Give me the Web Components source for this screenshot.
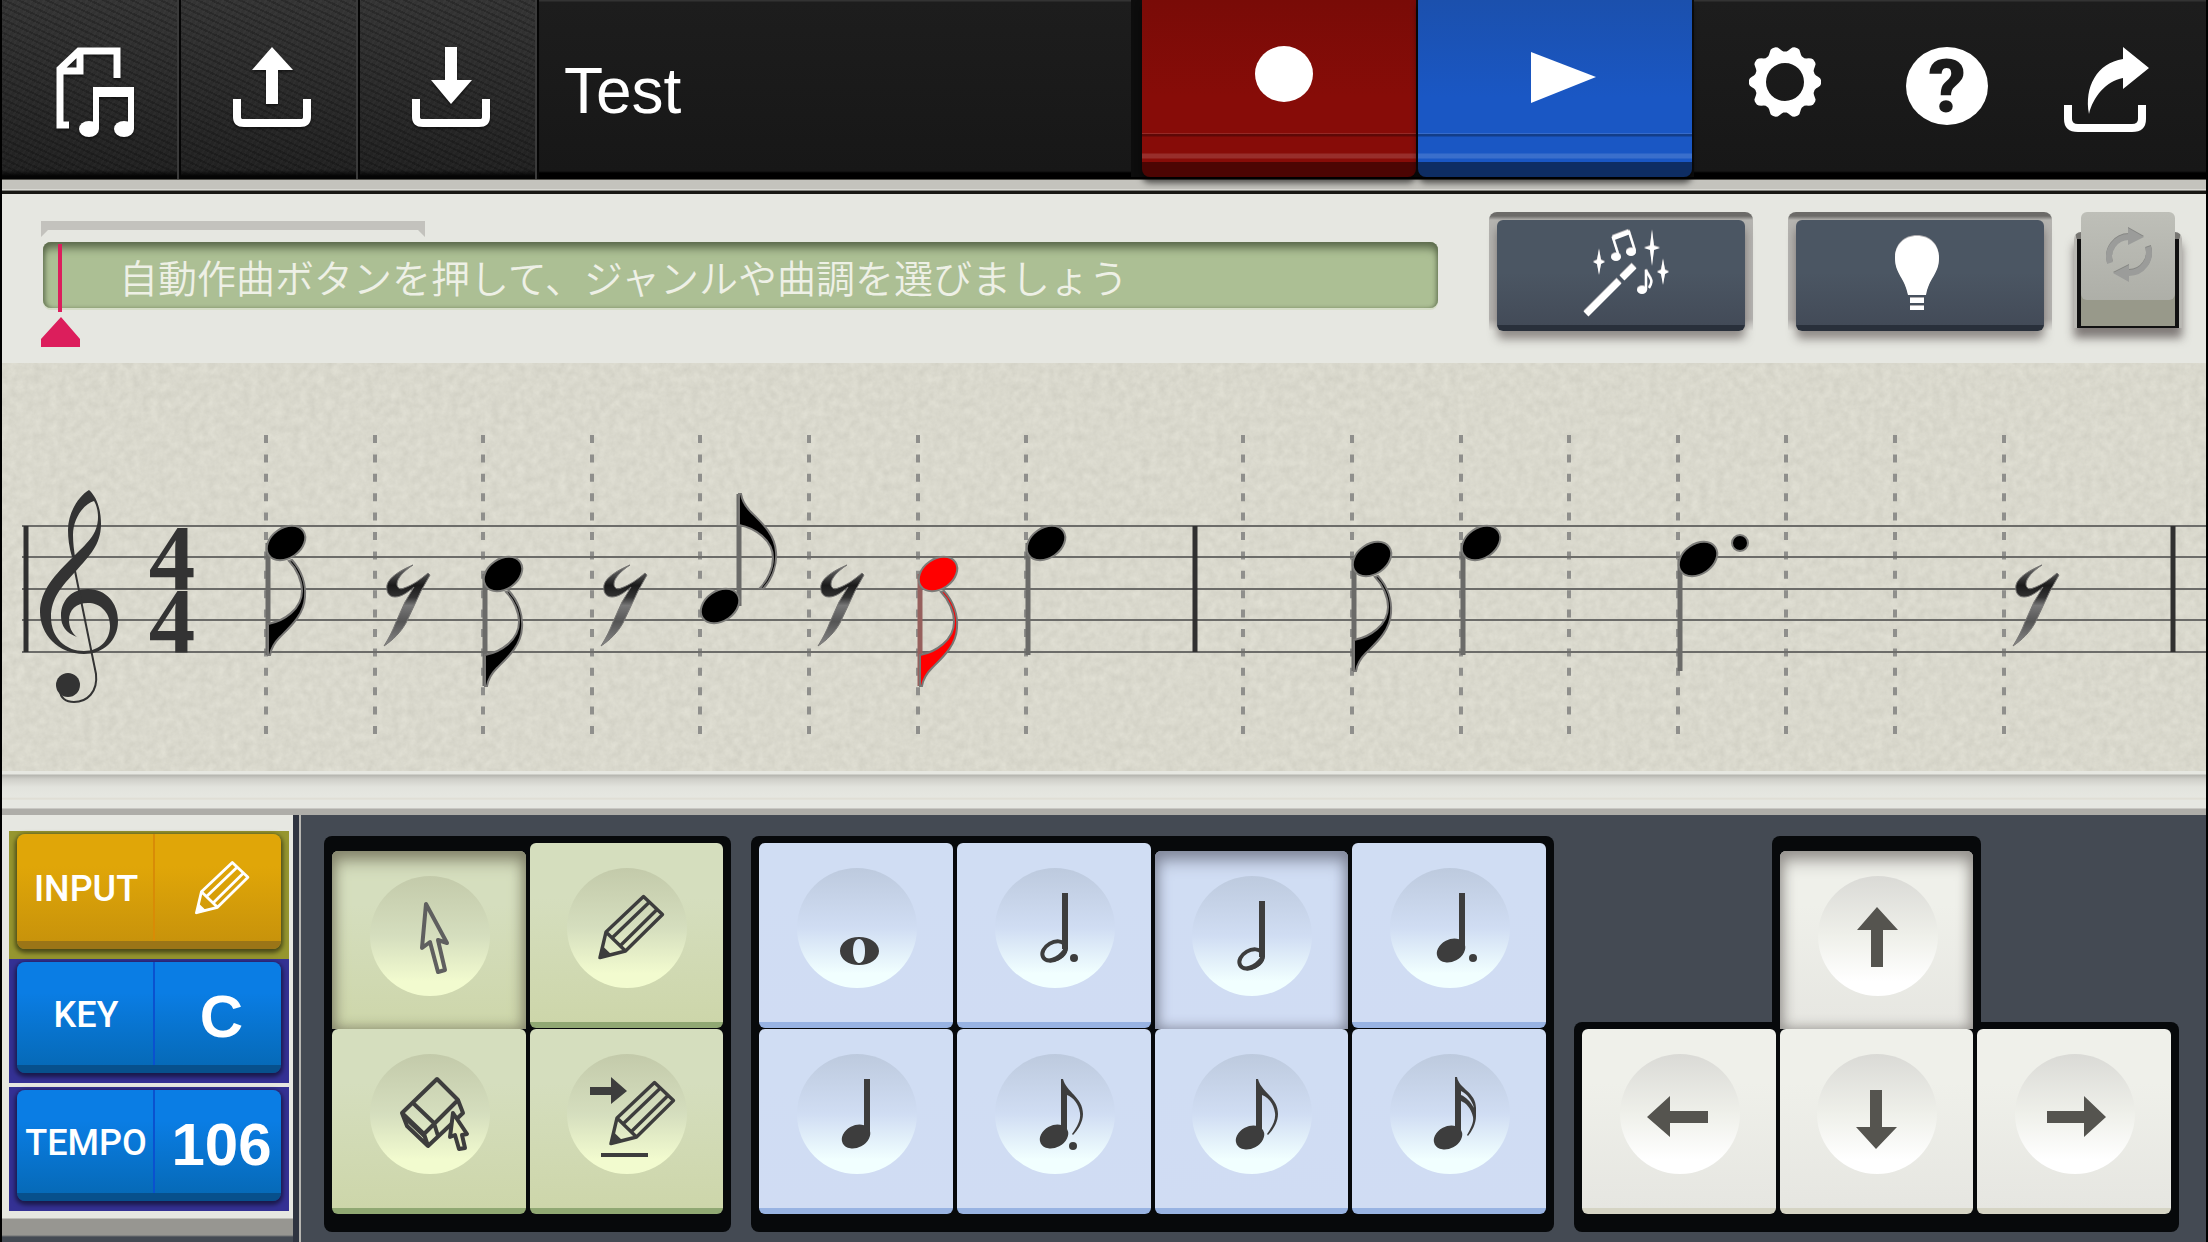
<!DOCTYPE html>
<html lang="ja">
<head>
<meta charset="utf-8">
<title>Test</title>
<style>
  body {
    margin: 0;
    background: #000;
    font-family: "Liberation Sans", Arial, sans-serif;
  }
</style>
</head>
<body>
<score-editor></score-editor>

<script>
/** Icon markup, keyed by name: [viewBox, width, height, content]. */
const pencil = `
  <g fill="none" stroke="currentColor" stroke-width="3.4" stroke-linejoin="round">
    <path d="M33,89.5 L39,64 L76.5,28.5 L95.5,46.5 L58.5,83 Z M39,64 L58.5,83 M45.5,69.5 L82,34.5 M53.5,77.5 L89.5,42"/>
  </g>
  <path fill="currentColor" d="M31.5,91 L35.5,78 L45,87 Z"/>`;

const head = '<ellipse cx="59" cy="82.5" rx="15" ry="11" transform="rotate(-28 59 82.5)"/>';
const openHead = `
  <ellipse cx="59" cy="83" rx="12.5" ry="8.5" transform="rotate(-30 59 83)" fill="none" stroke="currentColor" stroke-width="4"/>
  <path d="M46,88 C48,93 52,95 57,94 C66,93 73,87 73,80 L70,77 C68,84 60,91 50,91 Z"/>`;
const stem = '<rect x="67" y="25" width="6" height="56"/>';
const flag = '<path d="M64,25 H66 C69,38 86,43 86,60 C86,68 81,76 76,81 L75,80 C80,73 84,66 83,59 C82,50 76,43 70,41 V82 H64 Z"/>';
const circlePad = (content) => ['0 0 120 120', 120, 120, `<g fill="currentColor">${content}</g>`];

// Cog outline: ten rounded teeth round a hole
function cogPath() {
  const points = [];
  for (let a = 0; a < 360; a += 3) {
    const t = a * Math.PI / 180;
    const wave = Math.max(-0.8, Math.min(0.7, Math.cos(t * 10)));
    const r = 33.5 + wave * 3.6;
    points.push(`${(37 + r * Math.cos(t)).toFixed(1)},${(35 + r * Math.sin(t)).toFixed(1)}`);
  }
  return `M${points.join(' L')} Z M56,35 A19,19 0 1 0 18,35 A19,19 0 1 0 56,35 Z`;
}

const star = (x, y, w, h) =>
  `<path d="M${x},${y - h} L${x + 2},${y - 2} L${x + w},${y} L${x + 2},${y + 2} L${x},${y + h} L${x - 2},${y + 2} L${x - w},${y} L${x - 2},${y - 2} Z"/>`;

const tray = '<path d="M4,52 V70 Q4,76 11,76 H67 Q74,76 74,70 V52" fill="none" stroke="currentColor" stroke-width="8"/>';

const ICONS = {
  songs: ['-8 0 87 90', 87, 90, `
    <path d="M13,78 H4 V22 L23,4 H61 V31 M24,4 V24 H4" fill="none" stroke="currentColor" stroke-width="7"/>
    <path fill="currentColor" d="M37,40 H78 V82 H72 V50 H43 V82 H37 Z"/>
    <ellipse fill="currentColor" cx="33" cy="82" rx="10" ry="8"/>
    <ellipse fill="currentColor" cx="68" cy="82" rx="10" ry="8"/>`],
  upload: ['-4 0 83 80', 83, 80, `
    <path fill="currentColor" d="M39,0 L60,23 H45 V57 H33 V23 H19 Z"/>${tray}`],
  download: ['-4 0 83 80', 83, 80, `
    <path fill="currentColor" d="M33,0 H45 V33 H60 L39,57 L19,33 H33 Z"/>${tray}`],
  record: ['-9 0 67 56', 67, 56, '<ellipse fill="currentColor" cx="29" cy="28" rx="29" ry="28"/>'],
  play: ['2 0 85 58', 85, 58, '<path fill="currentColor" d="M20,6 L85,31 L20,57 Z"/>'],
  settings: ['0 0 74 70', 74, 70, `<path fill="currentColor" fill-rule="evenodd" d="${cogPath()}"/>`],
  help: ['-2 0 84 78', 84, 78, `
    <ellipse fill="currentColor" cx="41" cy="39" rx="41" ry="39"/>
    <text x="41" y="65" text-anchor="middle" font-family="Roboto, sans-serif" font-weight="900" font-size="74" fill="#1b1b1b">?</text>`],
  share: ['0 0 86 86', 86, 86, `
    <path fill="currentColor" d="M59,0 L85,21 L59,42 V31 C42,34 29,50 25,67 C20,40 33,16 59,12 Z"/>
    <path d="M4,58 V72 Q4,81 14,81 H68 Q78,81 78,72 V58" fill="none" stroke="currentColor" stroke-width="8"/>`],
  wand: ['-10 0 96 86', 96, 86, `
    <g fill="none" stroke="currentColor">
      <path d="M3,84 L36,51 M39,48 L51,36" stroke-width="7"/>
      <path d="M36,27 L30,8 L46,2 L52,21" stroke-width="2.4"/>
      <path d="M30,8 L46,2" stroke-width="5"/>
      <path d="M63,60 V40 C65,47 72,49 66,58" stroke-width="2.4"/>
    </g>
    <g fill="currentColor">
      <ellipse cx="33" cy="27" rx="5" ry="4"/><ellipse cx="48" cy="22" rx="5" ry="4"/>
      <ellipse cx="59" cy="60" rx="5" ry="4"/>
      ${star(16, 32, 6, 13)}${star(69, 18, 8, 18)}${star(80, 42, 6, 13)}
    </g>`],
  hint: ['0 0 50 74', 50, 74, `
    <path fill="currentColor" d="M22,0 C35,0 44,9 44,22 C44,38 34,42 31,59 H13 C10,42 0,38 0,22 C0,9 9,0 22,0 Z M15,62 H29 V67 H15 Z M15,70 H29 V74 H15 Z"/>`],
  loop: ['0 0 46 54', 46, 54, `
    <path d="M4,35 A20,20 0 0 1 23,9 M42,19 A20,20 0 0 1 23,45" fill="none" stroke="currentColor" stroke-width="6"/>
    <path fill="currentColor" d="M22,0 L38,9 L22,17 Z M23,37 L7,45 L23,54 Z"/>`],
  inputPencil: ['30 26 68 67', 56, 56, pencil],
  cursor: circlePad(`
    <path d="M56,28 L52,72 L60,66 L68,96 L75,94 L68,64 L77,67 Z" fill="none" stroke="#5f5f5f" stroke-width="4" stroke-linejoin="round"/>`),
  pencil: circlePad(pencil),
  eraser: circlePad(`
    <g fill="none" stroke="currentColor" stroke-width="4" stroke-linejoin="round">
      <path d="M67,25 L88,46 L54,80 L32,59 Z M88,46 L93,59 L58,92 L54,80 M32,59 L37,72 L58,92 M43,49 L64,69 L68,82"/>
      <path d="M35,65 L55,84" stroke-width="2"/>
      <path fill="#e6ecbf" d="M83,59 L80,83 L85,81 L89,95 L95,94 L92,81 L97,80 Z"/>
    </g>`),
  insert: circlePad(`
    <path d="M23,33 H44 V23 L60,37 L44,50 V41 H23 Z M34,99 H81 V103 H34 Z"/>
    <g transform="translate(11 0)">${pencil}</g>`),
  whole: circlePad('<path fill-rule="evenodd" d="M62,69 C73,69 82,75 82,83 C82,91 73,97 62,97 C51,97 43,91 43,83 C43,75 51,69 62,69 Z M62,71 C58,71 56,76 56,83 C56,90 59,95 62,95 C66,95 68,90 68,83 C68,76 66,71 62,71 Z"/>'),
  dottedHalf: circlePad(`${openHead}${stem}<circle cx="79" cy="90" r="4"/>`),
  half: circlePad(`${openHead}${stem}`),
  dottedQuarter: circlePad(`<g transform="translate(2 0)">${head}${stem}</g><circle cx="83" cy="90" r="4"/>`),
  quarter: circlePad(`${head}${stem}`),
  dottedEighth: circlePad(`${head}<g transform="translate(2 0)">${flag}</g><circle cx="78" cy="92" r="4"/>`),
  eighth: circlePad(`<g transform="translate(-1 1)">${head}</g>${flag}`),
  sixteenth: circlePad(`
    <g transform="translate(-1 1)">${head}</g>
    <path d="M65,23 H67 C69,35 86,38 86,54 V62 C86,70 82,77 78,82 L77,81 C81,74 84,68 83,63 C81,54 76,49 71,47 V82 H65 Z"/>
    <path d="M71,37 C77,40 82,46 84,54 C80,47 76,43 71,41 Z" fill="#d3ddee"/>`),
  up: circlePad('<path d="M59,31 L80,54 H65 V91 H53 V54 H39 Z"/>'),
  down: circlePad('<path d="M53,36 H65 V73 H80 L59,95 L39,73 H53 Z"/>'),
  left: circlePad('<path d="M27,63 L50,42 V57 H88 V69 H50 V83 Z"/>'),
  right: circlePad('<path d="M91,63 L69,42 V57 H32 V69 H69 V83 Z"/>')
};

function icon(name) {
  const [viewBox, width, height, content] = ICONS[name];
  return `<svg viewBox="${viewBox}" width="${width}" height="${height}" overflow="visible" aria-hidden="true">${content}</svg>`;
}

/** Base class: renders template() into an open shadow root. */
class BaseElement extends HTMLElement {
  constructor() {
    super();
    this.attachShadow({ mode: 'open' });
  }

  connectedCallback() {
    this.shadowRoot.innerHTML = this.template();
  }
}

/** <tool-button icon="upload" label="Upload"> — leather button on the left of the bar. */
class ToolButton extends BaseElement {
  template() {
    return `
      <style>
        :host { display: block; flex: 0 0 179px; box-sizing: border-box; border-right: 2px solid #050505; }
        button {
          display: flex;
          justify-content: center;
          box-sizing: border-box;
          width: 100%;
          height: 100%;
          padding: 47px 0 0 3px;
          border: 0;
          border-right: 2px solid #3a3a3a;
          color: #fff;
          background:
            linear-gradient(transparent 170px, #050505 176px),
            repeating-linear-gradient(25deg, rgba(0,0,0,.2) 0 2px, transparent 2px 6px),
            repeating-linear-gradient(-55deg, rgba(255,255,255,.02) 0 2px, transparent 2px 5px),
            linear-gradient(#343434, #202020);
        }
        svg { filter: drop-shadow(0 2px 1px rgba(0,0,0,.5)); }
      </style>
      <button type="button" aria-label="${this.getAttribute('label')}">${icon(this.getAttribute('icon'))}</button>
    `;
  }
}
customElements.define('tool-button', ToolButton);

/** <transport-button tone="record|play"> — tall coloured key. */
class TransportButton extends BaseElement {
  template() {
    const tone = this.getAttribute('tone');
    const c = tone === 'record'
      ? { top: '#790b07', face: '#870c08', edge: '#4c0503' }
      : { top: '#1b50ad', face: '#1a57c4', edge: '#0e2d63' };
    return `
      <style>
        :host { display: block; flex: 0 0 274px; height: 177px; position: relative; z-index: 1; }
        button {
          display: flex;
          justify-content: center;
          box-sizing: border-box;
          width: 100%;
          height: 100%;
          padding: 46px 0 0;
          border: 0;
          border-bottom: 15px solid ${c.edge};
          border-radius: 0 0 8px 8px;
          color: #fff;
          background:
            linear-gradient(transparent 133px, rgba(255,255,255,.12) 133px 134px, rgba(0,0,0,.3) 134px 136px, transparent 137px 153px, rgba(255,255,255,.14) 154px 158px, transparent 159px),
            linear-gradient(${c.top}, ${c.face} 60%);
          box-shadow: 0 6px 6px rgba(0,0,0,.6);
        }
      </style>
      <button type="button" aria-label="${this.getAttribute('label')}">${icon(tone)}</button>
    `;
  }
}
customElements.define('transport-button', TransportButton);

/** <bar-button> — flat icon button on the right of the bar. */
class BarButton extends BaseElement {
  template() {
    return `
      <style>
        :host { display: block; flex: 1; }
        button {
          display: flex;
          justify-content: center;
          width: 100%;
          height: 100%;
          padding: 47px 0 0;
          border: 0;
          background: none;
          color: #fff;
        }
      </style>
      <button type="button" aria-label="${this.getAttribute('label')}">${icon(this.getAttribute('icon'))}</button>
    `;
  }
}
customElements.define('bar-button', BarButton);

/** <top-bar> — file tools, song title, transport and settings. */
class TopBar extends BaseElement {
  template() {
    return `
      <style>
        :host { display: block; }
        header {
          display: flex;
          align-items: flex-start;
          height: 179px;
          background: linear-gradient(#333 0 1px, #1d1d1d 2px, #171717 171px, #000 173px);
        }
        tool-button, bar-button { height: 179px; }
        h1 {
          flex: 1;
          margin: 0;
          padding-left: 25px;
          font-size: 64px;
          font-weight: 400;
          line-height: 182px;
          color: #fff;
        }
        .transport {
          display: flex;
          gap: 2px;
          padding: 0 2px 0 11px;
          background: #0d0d0d;
        }
        nav { display: flex; flex: 0 0 484px; padding: 0 18px 0 10px; }
        .rail {
          height: 15px;
          background: linear-gradient(#55544f 0 1px, #c4c3bd 1px 10px, #efefea 11px, #171713 12px);
        }
      </style>
      <header>
        <tool-button icon="songs" label="Songs"></tool-button>
        <tool-button icon="upload" label="Upload"></tool-button>
        <tool-button icon="download" label="Download"></tool-button>
        <h1><slot></slot></h1>
        <div class="transport">
          <transport-button tone="record" label="Record"></transport-button>
          <transport-button tone="play" label="Play"></transport-button>
        </div>
        <nav>
          <bar-button icon="settings" label="Settings"></bar-button>
          <bar-button icon="help" label="Help"></bar-button>
          <bar-button icon="share" label="Share"></bar-button>
        </nav>
      </header>
      <div class="rail"></div>
    `;
  }
}
customElements.define('top-bar', TopBar);

/** <slate-button> — dark raised button set in a groove. */
class SlateButton extends BaseElement {
  template() {
    return `
      <style>
        :host {
          display: block;
          flex: 0 0 248px;
          padding: 8px 8px 0;
          border-radius: 8px 8px 0 0;
          background: linear-gradient(#6c6b68 0 4px, #b5b4b0 8px, #b5b3b0 90%, #e6e7e1);
        }
        button {
          display: flex;
          align-items: center;
          justify-content: center;
          width: 100%;
          height: 111px;
          padding: 0;
          border: 0;
          border-bottom: 6px solid #29303b;
          border-radius: 6px;
          color: #fff;
          background: linear-gradient(#4b5663 50%, #434b58);
          box-shadow: 0 8px 10px rgba(60,50,50,.5);
        }
        svg { filter: drop-shadow(0 -1px 0 rgba(200,195,195,.8)); }
      </style>
      <button type="button" aria-label="${this.getAttribute('label')}">${icon(this.getAttribute('icon'))}</button>
    `;
  }
}
customElements.define('slate-button', SlateButton);

/** <loop-toggle> — small two-position switch. */
class LoopToggle extends BaseElement {
  template() {
    return `
      <style>
        :host { display: block; flex: 0 0 108px; }
        button {
          display: block;
          position: relative;
          box-sizing: border-box;
          width: 100%;
          height: 96px;
          margin-top: 20px;
          padding: 0;
          border: 3px solid #b9b8b3;
          border-width: 7px 3px 0;
          border-top-color: #777672;
          border-radius: 7px 7px 0 0;
          background: #111;
          box-shadow: 0 10px 10px rgba(60,50,50,.6);
        }
        .well {
          display: block;
          height: 85px;
          margin: 0 4px;
          background: #98998a;
        }
        .cap {
          display: flex;
          align-items: center;
          justify-content: center;
          position: absolute;
          inset: -27px 4px 28px;
          padding: 0 0 2px 2px;
          box-sizing: border-box;
          border-radius: 6px;
          background: linear-gradient(#bebfb8, #aeafa8);
          color: #9b9c9a;
        }
        .cap svg { filter: drop-shadow(0 -1px 0 #858683); }
      </style>
      <button type="button" aria-label="Loop" aria-pressed="false">
        <span class="well"></span>
        <span class="cap">${icon('loop')}</span>
      </button>
    `;
  }
}
customElements.define('loop-toggle', LoopToggle);

/** <time-line> — range bracket, message display and playhead. */
class TimeLine extends BaseElement {
  template() {
    return `
      <style>
        :host { display: block; position: relative; flex: 1; padding-top: 9px; }
        .range {
          width: 384px;
          height: 16px;
          background: #c3c2bd;
          clip-path: polygon(0 0, 100% 0, 100% 100%, calc(100% - 7px) 9px, 7px 9px, 0 100%);
        }
        .lcd {
          box-sizing: border-box;
          height: 66px;
          margin: 5px 0 0 2px;
          padding: 4px 0 0 76px;
          border-radius: 8px;
          font-family: "Liberation Sans", "Noto Sans CJK JP", sans-serif;
          font-size: 39px;
          font-weight: 350;
          line-height: 68px;
          white-space: nowrap;
          color: #eef0e6;
          background: #acbf94;
          box-shadow: inset 0 8px 8px -2px #5c6a4c, inset 3px 0 4px -1px #6f7f5c, inset -3px 0 4px -2px #6f7f5c, 0 2px 0 #d6dec8;
        }
        .playhead { position: absolute; left: 0; top: 32px; }
      </style>
      <div class="range"></div>
      <div class="lcd" role="status"><slot></slot></div>
      <svg class="playhead" viewBox="0 0 40 103" width="40" height="103" aria-hidden="true">
        <path fill="#dc1e5c" d="M17,0 H21 V68 H17 Z M20,73 L39,95 V103 H0 V95 Z"/>
      </svg>
    `;
  }
}
customElements.define('time-line', TimeLine);

/** <score-sheet> — two bars of music on paper. */
class ScoreSheet extends BaseElement {
  // Grid position of a half-beat
  gridX(step) {
    return Math.round(266 + step * 108.6);
  }

  note({ step, y, type, up, selected, dotted }) {
    const fill = selected ? '#ff0000' : '#000';
    const x = this.gridX(step) + 20;
    const stemX = up ? 19 : -18;
    const stemEnd = up ? -112 : 112;
    const line = selected ? '#96605d' : '#6b6b69';
    const tail = type === 'eighth'
      ? `<path transform="${up ? 'translate(37 0) scale(1 -1)' : ''}" fill="${fill}" stroke="#777674" stroke-width="2"
          d="M3,18 L6,17 C16,28 20,42 19,54 C18,72 4,84 -6,94 C-12,100 -15,106 -16,112 L-18,112 L-18,81 C-2,78 16,66 16,48 C16,38 11,26 3,18 Z"/>`
      : '';
    return `
      <g transform="translate(${x} ${y})">
        <path d="M${stemX},0 V${stemEnd}" stroke="${line}" stroke-width="5"/>
        ${tail}
        <ellipse rx="21" ry="15" transform="rotate(-35)" fill="${fill}" stroke="#7d7d7a" stroke-width="2"/>
        ${dotted ? '<circle cx="42" cy="-16" r="8" stroke="#7d7d7a" stroke-width="2"/>' : ''}
      </g>`;
  }

  rest(step) {
    return `
      <path transform="translate(${this.gridX(step)} 0)" fill="url(#ink)" stroke="#777674" stroke-width="1"
        d="M38,565 C29,571 22,578 22,584 C22,588 25,590 29,588 C38,585 46,579 53,573 L55,575 L46,591 L31,623 C26,632 18,640 9,646 C14,638 18,630 21,622 L30,602 L39,587 C32,593 26,597 20,597 C13,597 11,591 12,585 C14,577 26,570 38,565 Z"/>`;
  }

  template() {
    const steps = [0, 1, 2, 3, 4, 5, 6, 7, 9, 10, 11, 12, 13, 14, 15, 16];
    const notes = [
      { step: 0, y: 543, type: 'eighth' },
      { step: 2, y: 574, type: 'eighth' },
      { step: 4, y: 606, type: 'eighth', up: true },
      { step: 6, y: 574, type: 'eighth', selected: true },
      { step: 7, y: 543, type: 'quarter' },
      { step: 10, y: 559, type: 'eighth' },
      { step: 11, y: 543, type: 'quarter' },
      { step: 13, y: 559, type: 'quarter', dotted: true }
    ];
    return `
      <style>
        :host { display: block; background: #e6e7e1; }
        .sheet { display: block; width: 100%; height: auto; }
        .edge {
          height: 37px;
          background: linear-gradient(#e6e7e1 0 3px, #b5b5af 4px, #cfcfc9 8px, #e2e3dd 16px, #e6e7e1 26px, #dedcd2 28px, #e6e7e1 29px);
        }
        .rail { height: 7px; background: #aeada8; border-top: 1px solid #c9c8c3; box-sizing: border-box; }
      </style>
      <svg class="sheet" viewBox="2 363 2204 408" role="img" aria-label="Score">
        <defs>
          <filter id="paper" x="0" y="0" width="100%" height="100%" color-interpolation-filters="sRGB">
            <feTurbulence type="fractalNoise" baseFrequency="0.12" numOctaves="5" seed="4"/>
            <feColorMatrix values=".08 0 0 0 .812  .08 0 0 0 .808  .08 0 0 0 .763  0 0 0 0 1"/>
          </filter>
          <linearGradient id="ink" x1="0" y1="0" x2="0" y2="1">
            <stop offset="0" stop-color="#777"/>
            <stop offset=".25" stop-color="#1a1a1a"/>
            <stop offset=".4" stop-color="#333"/>
            <stop offset=".5" stop-color="#777"/>
            <stop offset=".7" stop-color="#555"/>
            <stop offset="1" stop-color="#888"/>
          </linearGradient>
        </defs>
        <rect x="2" y="363" width="2204" height="408" filter="url(#paper)"/>
        <g stroke="#8f8f8c" stroke-width="4" stroke-dasharray="8 11.4">
          ${steps.map(s => `<path d="M${this.gridX(s)},435 V735"/>`).join('')}
        </g>
        <path d="M22,526 H2206 M22,557 H2206 M22,589 H2206 M22,620 H2206 M22,652 H2206" stroke="#6c6c69" stroke-width="2"/>
        <path d="M26,526 V652 M1195,526 V652 M2173,526 V652" stroke="#303030" stroke-width="5"/>
        <g fill="#333">
          <path d="M89,490 C97,497 101,510 101,524 C101,545 89,556 76,571 C62,586 51,598 51,617 C51,638 66,651 84,651 C100,651 110,640 110,626 C110,611 99,603 88,603 C76,603 69,610 69,620 C69,627 72,633 77,637 C66,633 61,626 61,616 C61,600 72,589 88,589 C106,589 118,603 118,621 C118,641 103,654 84,654 C58,654 40,634 40,612 C40,590 56,574 72,558 C86,544 98,535 98,517 C98,510 96,504 94,501 C84,504 73,518 73,535 C73,543 74,550 75,557 L72,557 C69,547 68,538 68,530 C68,512 79,496 89,490 Z"/>
          <path d="M74,566 L96,674 C98,692 87,702 74,702 C66,702 60,698 60,690" fill="none" stroke="#333" stroke-width="2"/>
          <ellipse cx="68" cy="685" rx="12" ry="12"/>
          <g font-family="'Liberation Serif', serif" font-weight="700" font-size="93" text-anchor="middle">
            <text x="172" y="589">4</text>
            <text x="172" y="652">4</text>
          </g>
        </g>
        ${notes.map(n => this.note(n)).join('')}
        ${[1, 3, 5, 16].map(s => this.rest(s)).join('')}
      </svg>
      <div class="edge"></div>
      <div class="rail"></div>
    `;
  }
}
customElements.define('score-sheet', ScoreSheet);

/** <setting-tile tone="gold|blue" label="KEY">value</setting-tile> */
class SettingTile extends BaseElement {
  template() {
    const gold = this.getAttribute('tone') === 'gold';
    const c = gold
      ? { mat: '#96962f', top: '#e0a608', low: '#c8930b', lip: '#9b7517', line: '#d88c06' }
      : { mat: '#343194', top: '#0a7de4', low: '#066ab8', lip: '#07508c', line: '#0a52cf' };
    return `
      <style>
        :host { display: block; padding: 3px 8px 10px; background: ${c.mat}; }
        button {
          display: flex;
          box-sizing: border-box;
          width: 100%;
          height: ${gold ? 115 : 111}px;
          padding: 0;
          border: 0;
          border-bottom: 8px solid ${c.lip};
          border-radius: 8px;
          color: #fff;
          background: linear-gradient(${c.top} 30%, ${c.low});
          box-shadow: 0 2px 4px 2px rgba(0,0,0,.5);
        }
        .label, .value {
          display: flex;
          align-items: center;
          justify-content: center;
          box-sizing: border-box;
          height: 100%;
        }
        .label {
          flex: 0 0 138px;
          padding: 3px 0 0 2px;
          border-right: 2px solid ${c.line};
          font: 500 36px Roboto, sans-serif;
        }
        .value {
          flex: 1;
          padding: 6px 0 0 7px;
          font: 700 60px "Liberation Sans", Arial, sans-serif;
        }
        .value svg { margin-bottom: 6px; }
      </style>
      <button type="button">
        <span class="label">${this.getAttribute('label')}</span>
        <span class="value">${this.hasAttribute('icon') ? icon(this.getAttribute('icon')) : '<slot></slot>'}</span>
      </button>
    `;
  }
}
customElements.define('setting-tile', SettingTile);

/** <pad-key icon="half" tone="blue" pressed> — one key of a pad. */
class PadKey extends BaseElement {
  template() {
    const tones = {
      green: { top: '#d5debe', low: '#cdd6aa', lip: '#90a873', dip: '#c3caaa', glow: '#f2fbcf', ink: '#3d3d3d', shade: '#83836b' },
      blue: { top: '#d0ddf3', low: '#d0dcf3', lip: '#98b3e2', dip: '#bdcade', glow: '#f1ffff', ink: '#3d3d3d', shade: '#81879a' },
      white: { top: '#eff0ea', low: '#e6e6e1', lip: '#d5d4c4', dip: '#dadad6', glow: '#ffffff', ink: '#55544f', shade: '#94918d' }
    };
    const c = tones[this.getAttribute('tone')];
    const pressed = this.hasAttribute('pressed');
    return `
      <style>
        :host { display: block; height: 186px; }
        button {
          display: flex;
          justify-content: center;
          box-sizing: border-box;
          width: 100%;
          height: 185px;
          padding: 25px 0 0 2px;
          border: 0;
          border-bottom: 6px solid ${c.lip};
          border-radius: 6px;
          color: ${c.ink};
          background: linear-gradient(${c.top} 30%, ${c.low});
        }
        .pressed {
          height: 178px;
          margin-top: 8px;
          border-bottom: 0;
          border-radius: 6px 6px 0 0;
          box-shadow: inset 0 10px 18px -2px ${c.shade}, inset 0 0 14px 0 ${c.shade};
        }
        .dish {
          width: 120px;
          height: 120px;
          border-radius: 50%;
          background: linear-gradient(${c.dip}, ${c.top} 50%, ${c.glow} 88%);
        }
        svg { display: block; }
      </style>
      <button type="button" class="${pressed ? 'pressed' : ''}" aria-pressed="${pressed}" aria-label="${this.getAttribute('icon')}">
        <span class="dish">${icon(this.getAttribute('icon'))}</span>
      </button>
    `;
  }
}
customElements.define('pad-key', PadKey);

/** <key-pad columns="4"> — black well holding two rows of keys. */
class KeyPad extends BaseElement {
  template() {
    const columns = Number(this.getAttribute('columns'));
    return `
      <style>
        :host {
          display: grid;
          grid-template-columns: repeat(${columns}, 1fr);
          column-gap: 4px;
          flex: ${columns} 1 ${(columns - 1) * 4}px;
          padding: 7px 8px 17px;
          border-radius: 8px;
          background: #07090b;
        }
      </style>
      <slot></slot>
    `;
  }
}
customElements.define('key-pad', KeyPad);

/** <arrow-pad> — inverted-T cursor keys. */
class ArrowPad extends BaseElement {
  template() {
    return `
      <style>
        :host { display: flex; flex-direction: column; align-items: center; flex: 3 1 8px; padding: 0 8px; }
        .up {
          display: grid;
          box-sizing: border-box;
          width: calc((100% - 8px) / 3 + 16px);
          padding: 7px 8px 0;
          border-radius: 8px 8px 0 0;
          background: #07090b;
        }
        .row {
          display: grid;
          grid-template-columns: repeat(3, 1fr);
          column-gap: 4px;
          align-self: stretch;
          margin: -7px -8px 0;
          padding: 7px 8px 17px;
          border-radius: 8px;
          background: #07090b;
        }
        .up pad-key { position: relative; z-index: 1; }
      </style>
      <div class="up"><pad-key tone="white" icon="up" pressed></pad-key></div>
      <div class="row">
        <pad-key tone="white" icon="left"></pad-key>
        <pad-key tone="white" icon="down"></pad-key>
        <pad-key tone="white" icon="right"></pad-key>
      </div>
    `;
  }
}
customElements.define('arrow-pad', ArrowPad);

/** <score-editor> — the whole screen. */
class ScoreEditor extends BaseElement {
  template() {
    const keys = (tone, names, pressed) => names.map(n =>
      `<pad-key tone="${tone}" icon="${n}" ${n === pressed ? 'pressed' : ''}></pad-key>`).join('');
    return `
      <style>
        :host { display: flex; flex-direction: column; min-height: 100vh; padding: 0 2px; box-sizing: border-box; }
        .guide {
          display: flex;
          height: 151px;
          padding: 18px 24px 0 39px;
          background: #e6e7e1;
        }
        time-line { margin-right: 51px; }
        slate-button { margin-right: 35px; height: 111px; }
        slate-button + slate-button { margin-right: 22px; }
        .deck { display: flex; flex: 1; background: #444a53; }
        .settings {
          flex: 0 0 280px;
          padding: 16px 4px 0 7px;
          background: linear-gradient(#e6e7e1 403px, #979691 404px 420px, #444a53 422px);
          border-right: 6px solid #2f3440;
        }
        .settings setting-tile:last-child { margin-top: 4px; }
        .pads {
          display: flex;
          align-items: flex-start;
          flex: 1;
          gap: 20px;
          padding: 21px 27px 10px 23px;
          border-left: 2px solid #b7b6b1;
        }
      </style>
      <top-bar>Test</top-bar>
      <section class="guide">
        <time-line>自動作曲ボタンを押して、ジャンルや曲調を選びましょう</time-line>
        <slate-button icon="wand" label="Auto compose"></slate-button>
        <slate-button icon="hint" label="Hint"></slate-button>
        <loop-toggle></loop-toggle>
      </section>
      <score-sheet></score-sheet>
      <section class="deck">
        <div class="settings">
          <setting-tile tone="gold" label="INPUT" icon="inputPencil"></setting-tile>
          <setting-tile tone="blue" label="KEY">C</setting-tile>
          <setting-tile tone="blue" label="TEMPO">106</setting-tile>
        </div>
        <div class="pads">
          <key-pad columns="2">${keys('green', ['cursor', 'pencil', 'eraser', 'insert'], 'cursor')}</key-pad>
          <key-pad columns="4">${keys('blue', ['whole', 'dottedHalf', 'half', 'dottedQuarter', 'quarter', 'dottedEighth', 'eighth', 'sixteenth'], 'half')}</key-pad>
          <arrow-pad></arrow-pad>
        </div>
      </section>
    `;
  }
}
customElements.define('score-editor', ScoreEditor);
</script>
</body>
</html>
